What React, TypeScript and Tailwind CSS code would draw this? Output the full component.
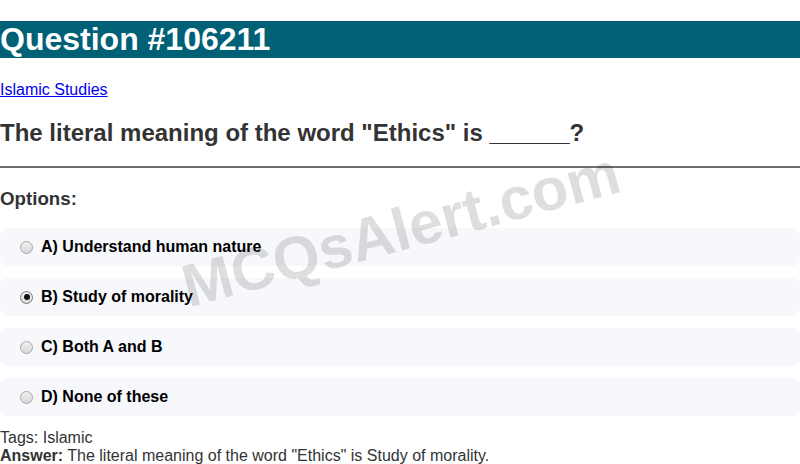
import React from 'react';

interface Option {
  label: string;
  checked?: boolean;
}

const options: Option[] = [
  { label: 'A) Understand human nature' },
  { label: 'B) Study of morality', checked: true },
  { label: 'C) Both A and B' },
  { label: 'D) None of these' },
];

const Radio: React.FC<{ checked?: boolean }> = ({ checked }) => (
  <span
    className={`flex h-[13px] w-[13px] shrink-0 items-center justify-center rounded-full border bg-gradient-to-b from-[#f0f0f0] to-[#d8d8d8] ${
      checked ? 'border-[#7a7a7a]' : 'border-[#a8a8a8]'
    }`}
  >
    {checked && <span className="h-[6px] w-[6px] rounded-full bg-[#111]" />}
  </span>
);

const App: React.FC = () => (
  <div className="relative overflow-hidden bg-white font-['Liberation_Sans',Arial,sans-serif] text-[#333]">
    <div className="h-[21px]" />
    <h1 className="bg-[#006075] text-[32px] font-bold leading-[37px] text-white">Question #106211</h1>

    <p className="mt-[23px] text-[16px] leading-[18px]">
      <a href="#" className="text-[#0000ee] underline">
        Islamic Studies
      </a>
    </p>

    <h2 className="mt-[20px] text-[24px] font-bold leading-[28px]">
      The literal meaning of the word "Ethics" is ______?
    </h2>

    <hr className="mt-[19px] border-t-2 border-[#6e6e6e]" />

    <h3 className="mt-[20px] text-[18.72px] font-bold leading-[21px]">Options:</h3>

    <div className="mt-[19px] flex flex-col gap-3">
      {options.map((o) => (
        <div key={o.label} className="flex h-[38px] items-center gap-2 rounded-lg bg-[#f7f8fc] pl-5">
          <Radio checked={o.checked} />
          <span className="text-[16px] font-bold text-black">{o.label}</span>
        </div>
      ))}
    </div>

    <div className="mt-[13px] text-[16px] leading-[18px]">
      <div>Tags: Islamic</div>
      <div>
        <b>Answer:</b> The literal meaning of the word "Ethics" is Study of morality.
      </div>
    </div>

    <div className="pointer-events-none absolute left-[401px] top-[230px] -translate-x-1/2 -translate-y-1/2 rotate-[-15deg] whitespace-nowrap text-[60px] font-bold text-black/[0.13]">
      MCQsAlert.com
    </div>
  </div>
);

export default App;
